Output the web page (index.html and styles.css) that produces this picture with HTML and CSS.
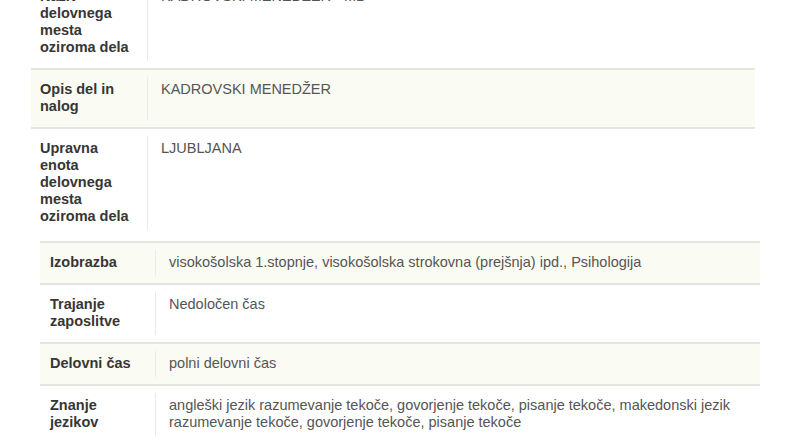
FILE: index.html
```html
<!DOCTYPE html>
<html lang="sl">

<head>
    <meta charset="utf-8">
    <meta name="viewport" content="width=device-width, initial-scale=1.0">
    <title>Prosto delovno mesto</title>
    <link rel="stylesheet" href="styles.css">
</head>

<body>

    <div class="page">

        <section class="info">
            <div class="row">
                <div class="label">Naziv delovnega mesta oziroma dela</div>
                <div class="value">KADROVSKI MENEDŽER - MD</div>
            </div>
            <div class="row alt">
                <div class="label">Opis del in nalog</div>
                <div class="value">KADROVSKI MENEDŽER</div>
            </div>
            <div class="row last">
                <div class="label">Upravna enota delovnega mesta oziroma dela</div>
                <div class="value">LJUBLJANA</div>
            </div>
        </section>

        <section class="details">
            <div class="row alt">
                <div class="label">Izobrazba</div>
                <div class="value">visokošolska 1.stopnje, visokošolska strokovna (prejšnja) ipd., Psihologija</div>
            </div>
            <div class="row">
                <div class="label">Trajanje zaposlitve</div>
                <div class="value">Nedoločen čas</div>
            </div>
            <div class="row alt">
                <div class="label">Delovni čas</div>
                <div class="value">polni delovni čas</div>
            </div>
            <div class="row">
                <div class="label">Znanje jezikov</div>
                <div class="value">angleški jezik razumevanje tekoče, govorjenje tekoče, pisanje tekoče, makedonski jezik razumevanje tekoče, govorjenje tekoče, pisanje tekoče</div>
            </div>
        </section>

    </div>

</body>

</html>
```

FILE: styles.css
```css
body {
    margin: 0;
    background-color: #ffffff;
    font-family: "Liberation Sans", Arial, sans-serif;
    font-size: 14.5px;
    line-height: 17px;
    color: #555555;
}

/* page is scrolled, first row sits partly above the top */
.page {
    margin-top: -23px;
}

.info {
    margin-left: 31px;
    width: 724px;
}

.details {
    margin-left: 40px;
    width: 720px;
    border-top: 2px solid #e4e5e0;
}

.row {
    display: grid;
    padding: 7px 0;
    border-bottom: 2px solid #e4e5e0;
}

.info .row {
    grid-template-columns: 116px 1fr;
}

.details .row {
    grid-template-columns: 115px 1fr;
}

.info .row.last {
    border-bottom: none;
    padding-bottom: 11px;
}

.alt {
    background-color: #fafbf3;
}

.label {
    padding: 4px 10px 5px 9px;
    font-weight: bold;
    color: #363636;
}

.details .label {
    padding-left: 10px;
}

.value {
    padding: 4px 14px 5px 13px;
    border-left: 1px solid #ebebe8;
}
```
